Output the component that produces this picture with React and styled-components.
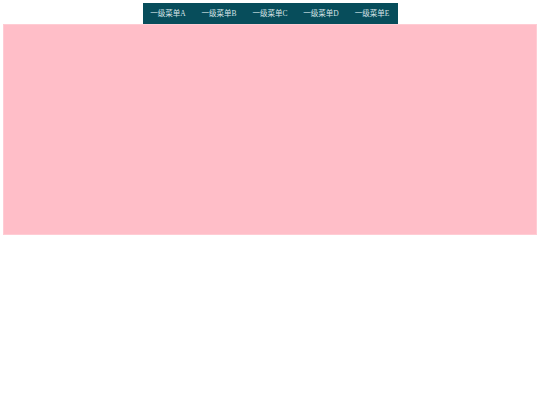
import React from "react";
import styled, { createGlobalStyle } from "styled-components";

const Global = createGlobalStyle`
  html, body { margin: 0; padding: 0; background: #fff; }
  body { font-family: "Liberation Serif", "Noto Sans CJK SC", serif; }
`;

const Page = styled.div`
  padding: 3px 3px 0;
  display: flex;
  flex-direction: column;
  align-items: center;
`;

const Nav = styled.ul`
  list-style: none;
  margin: 0;
  padding: 0;
  display: flex;
  height: 21px;
  background: #074d5b;
`;

const NavItem = styled.li`
  width: 51px;
  padding-bottom: 2px;
  box-sizing: border-box;
  display: flex;
  align-items: center;
  justify-content: center;
  color: #d6e3e6;
  font-size: 7.5px;
  white-space: nowrap;
  cursor: pointer;
`;

const Banner = styled.div`
  align-self: stretch;
  height: 211px;
  background: #ffbec8;
  box-shadow: inset 0 0 0 1px #ffccd4;
`;

const items = ["一级菜单A", "一级菜单B", "一级菜单C", "一级菜单D", "一级菜单E"];

export default function App() {
  return (
    <>
      <Global />
      <Page>
        <Nav>
          {items.map((t) => (
            <NavItem key={t}>{t}</NavItem>
          ))}
        </Nav>
        <Banner />
      </Page>
    </>
  );
}
